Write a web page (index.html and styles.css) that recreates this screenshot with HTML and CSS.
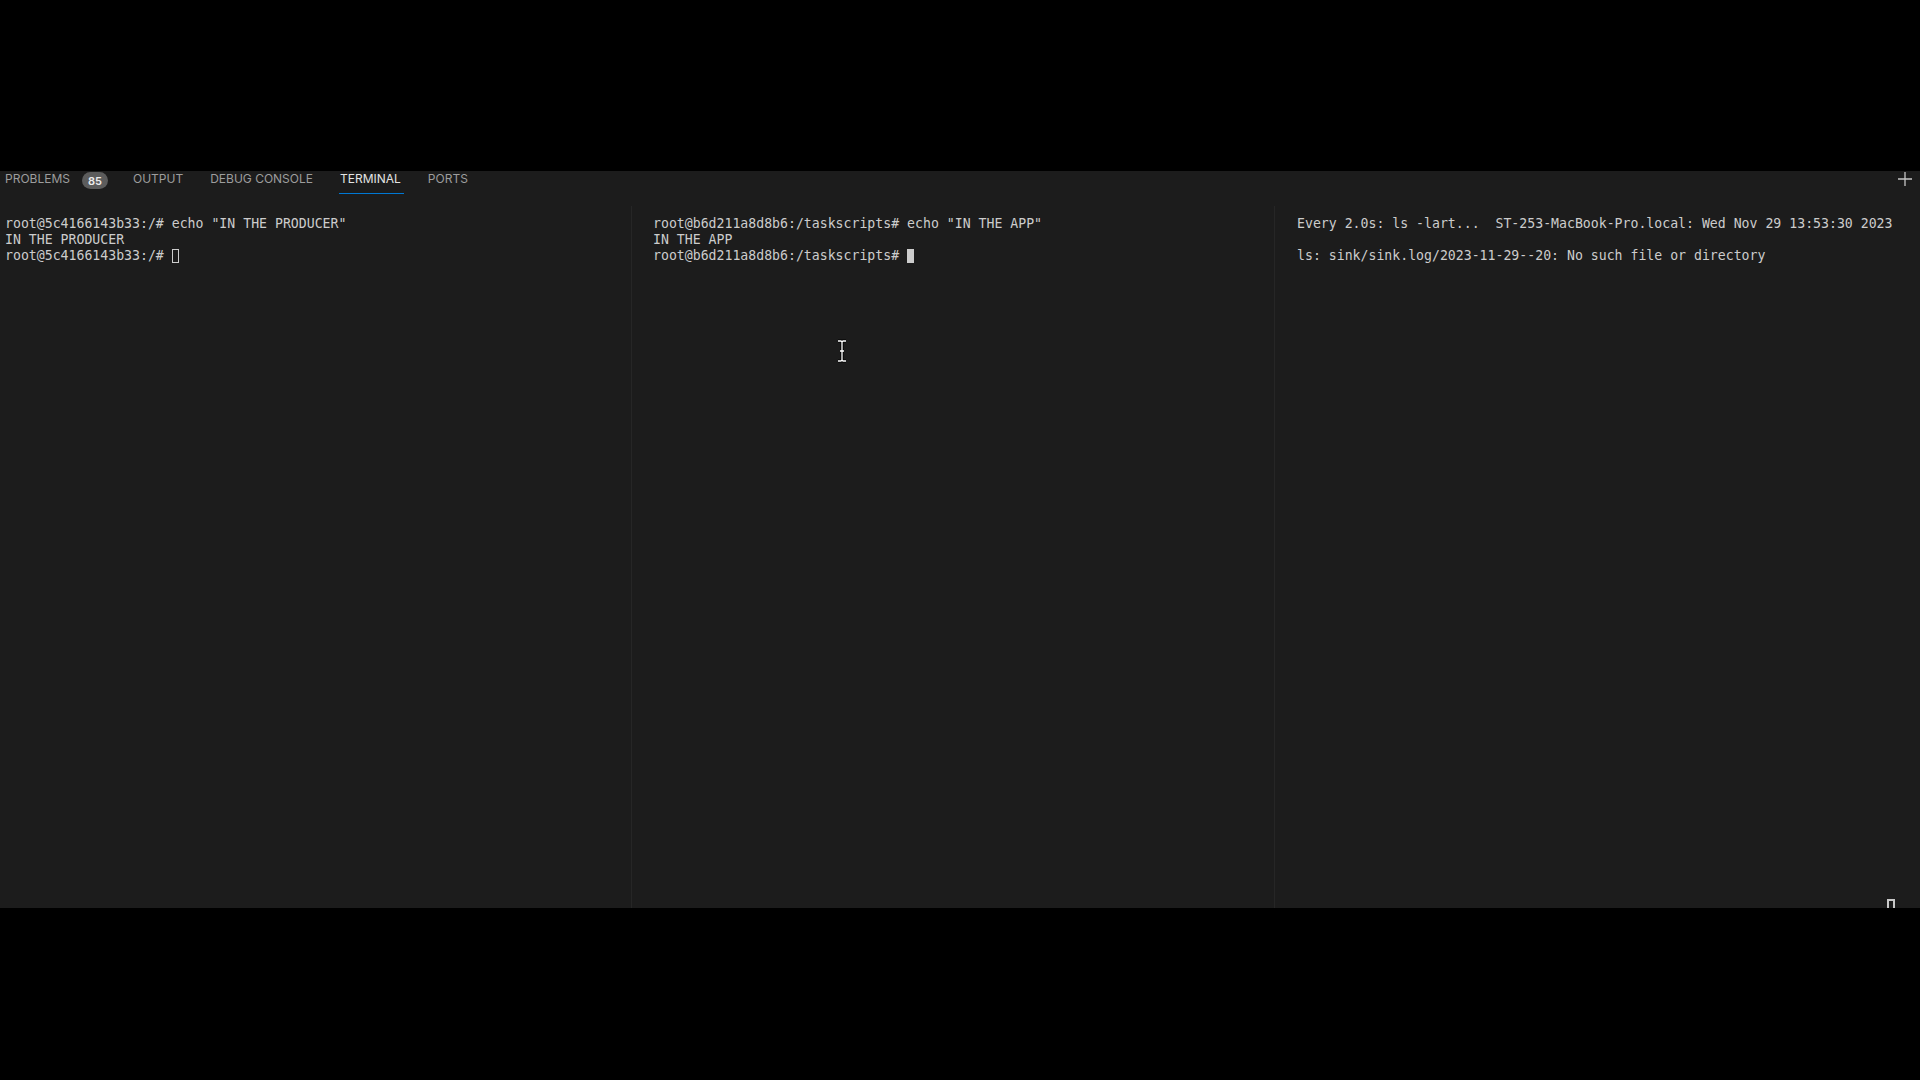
FILE: index.html
```html
<!DOCTYPE html>
<html>
<head>
<meta charset="utf-8">
<link rel="stylesheet" href="styles.css">
</head>
<body>
<div class="top-black"></div>
<div class="panel">
  <div class="tabbar">
    <div class="tab first-tab">PROBLEMS <span class="badge">85</span></div>
    <div class="tab">OUTPUT</div>
    <div class="tab">DEBUG CONSOLE</div>
    <div class="tab active">TERMINAL</div>
    <div class="tab">PORTS</div>
    <div class="spacer"></div>
    <svg class="plus" width="16" height="16" viewBox="0 0 16 16"><path d="M8 1v14M1 8h14" stroke="#c5c5c5" stroke-width="1.3" fill="none"/></svg>
  </div>
  <div class="panes">
    <div class="pane first">
      <div class="line">root@5c4166143b33:/# echo "IN THE PRODUCER"</div>
      <div class="line">IN THE PRODUCER</div>
      <div class="line">root@5c4166143b33:/# <span class="cur-outline"></span></div>
    </div>
    <div class="pane">
      <div class="line">root@b6d211a8d8b6:/taskscripts# echo "IN THE APP"</div>
      <div class="line">IN THE APP</div>
      <div class="line">root@b6d211a8d8b6:/taskscripts# <span class="cur-solid"></span></div>
      <svg class="ibeam" width="12" height="24" viewBox="0 0 12 24"><path d="M2 2h3l1 1 1-1h3M6 3v18M2 22h3l1-1 1 1h3M4 12h4" stroke="#000" stroke-width="3.2" fill="none"/><path d="M2 2h3l1 1 1-1h3M6 3v18M2 22h3l1-1 1 1h3M4 12h4" stroke="#fff" stroke-width="1.3" fill="none"/></svg>
    </div>
    <div class="pane last">
      <div class="line">Every 2.0s: ls -lart...  ST-253-MacBook-Pro.local: Wed Nov 29 13:53:30 2023</div>
      <div class="line"> </div>
      <div class="line">ls: sink/sink.log/2023-11-29--20: No such file or directory</div>
      <span class="corner"></span>
    </div>
  </div>
</div>
</body>
</html>
```
FILE: styles.css
```css
html, body {
  margin: 0;
  padding: 0;
  background: #000;
  width: 1920px;
  height: 1080px;
  overflow: hidden;
}
.top-black {
  height: 171px;
}
.panel {
  height: 737px;
  background: #1c1c1c;
  display: flex;
  flex-direction: column;
}
.tabbar {
  height: 35px;
  display: flex;
  align-items: flex-start;
  font-family: "Inter", "Liberation Sans", sans-serif;
  font-size: 12px;
  color: #9d9d9d;
  padding-left: 5px;
  padding-right: 7px;
}
.tab {
  height: 23px;
  line-height: 16px;
  display: flex;
  align-items: flex-start;
  margin-right: 27px;
  position: relative;
}
.tab.first-tab {
  margin-right: 25px;
}
.tab.active {
  color: #e4e4e4;
}
.tab.active::after {
  content: "";
  position: absolute;
  left: -1px;
  right: -3px;
  bottom: 0;
  height: 1px;
  background: #0078d4;
}
.badge {
  margin-left: 12px;
  margin-top: 1px;
  background: #5c5c5c;
  color: #ececec;
  border-radius: 9px;
  height: 17px;
  width: 26px;
  box-sizing: border-box;
  font-size: 11px;
  font-weight: 600;
  display: inline-flex;
  align-items: center;
  justify-content: center;
}
.spacer { flex: 1; }
.plus {
  margin-top: 0;
}
.panes {
  flex: 1;
  display: flex;
  font-family: "DejaVu Sans Mono", monospace;
  font-size: 13.2px;
  line-height: 16px;
  color: #cccccc;
}
.pane {
  position: relative;
  padding: 10px 0 0 21px;
  box-sizing: border-box;
  border-left: 1px solid #262626;
  width: 643px;
}
.pane.first {
  width: 631px;
  padding-left: 5px;
  border-left: none;
}
.pane.last {
  flex: 1;
  padding-left: 22px;
}
.line {
  height: 16px;
  white-space: pre;
}
.cur-outline {
  display: inline-block;
  width: 7px;
  height: 14px;
  border: 1px solid #cccccc;
  box-sizing: border-box;
  vertical-align: -3px;
}
.cur-solid {
  display: inline-block;
  width: 7px;
  height: 14px;
  background: #cccccc;
  vertical-align: -3px;
}
.ibeam {
  position: absolute;
  left: 204px;
  top: 133px;
}
.corner {
  position: absolute;
  right: 25px;
  bottom: 0;
  width: 4px;
  height: 7px;
  border: 2px solid #c8c8c8;
  border-bottom: none;
}
```
